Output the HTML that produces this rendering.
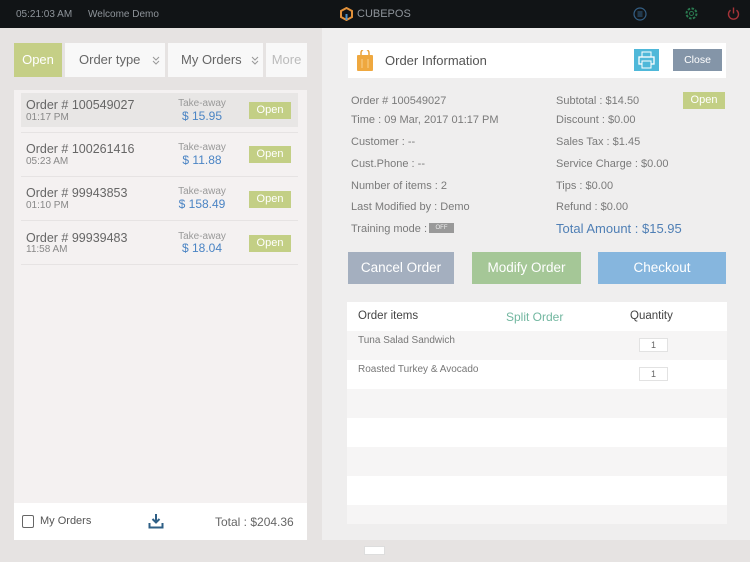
<!DOCTYPE html>
<html><head><style>
*{margin:0;padding:0;box-sizing:border-box}
body{width:750px;height:562px;overflow:hidden;background:#e6e3e2;font-family:"Liberation Sans",sans-serif;position:relative;color:#555}
.a{position:absolute}
.top{left:0;top:0;width:750px;height:28px;background:#111416;color:#8e949a;font-size:10px}
.tab{top:43px;height:34px;background:#f8f8f8;font-size:13px;color:#666;line-height:34px}
.row{left:21px;width:277px;height:44px;border-bottom:1px solid #e6e3e3}
.on{font-size:12.5px;color:#666}
.tm{font-size:10px;color:#888}
.ta{font-size:10px;color:#999;text-align:center;width:60px}
.pr{font-size:12px;color:#4a84c4;text-align:center;width:60px}
.ob{width:42px;height:17px;background:#c3cf85;color:#fff;font-size:11px;text-align:center;line-height:17px}
.info{font-size:11px;color:#7a7a7a}
.btn{top:252px;height:32px;color:#fff;font-size:13.5px;text-align:center;line-height:32px}
.tr{left:347px;width:380px;height:29px}
.q{left:639px;width:29px;height:14px;background:#fff;border:1px solid #e2e2e2;font-size:9px;text-align:center;line-height:12px;color:#666}
.chev{position:absolute;top:13px}
</style></head><body>
<div class="a top">
 <span class="a" style="left:16px;top:9px">05:21:03 AM</span>
 <span class="a" style="left:88px;top:9px">Welcome Demo</span>
 <svg class="a" style="left:340px;top:7px" width="13" height="14" viewBox="0 0 13 14"><path d="M6.5 1L12 4v6l-5.5 3L1 10V4z" fill="none" stroke="#e2913a" stroke-width="2"/><path d="M6.5 7v6" stroke="#4a90c8" stroke-width="2"/></svg>
 <span class="a" style="left:357px;top:8px;font-size:11px;color:#8e949a">CUBEPOS</span>
 <svg class="a" style="left:633px;top:7px" width="14" height="14"><circle cx="7" cy="7" r="6" fill="none" stroke="#345f85" stroke-width="1.2"/><path d="M4.5 5h5M4.5 7h5M4.5 9h5" stroke="#345f85"/></svg>
 <svg class="a" style="left:684px;top:6px" width="15" height="15"><circle cx="7.5" cy="7.5" r="5" fill="none" stroke="#2a7a50" stroke-width="2" stroke-dasharray="2.5 1.4"/><circle cx="7.5" cy="7.5" r="2" fill="none" stroke="#2a7a50"/></svg>
 <svg class="a" style="left:726px;top:6px" width="15" height="15"><path d="M4.5 4.2A5 5 0 1 0 10.5 4.2" fill="none" stroke="#a53338" stroke-width="1.4"/><path d="M7.5 1.5v6" stroke="#a53338" stroke-width="1.4"/></svg>
</div>
<div class="a" style="left:322px;top:28px;width:428px;height:512px;background:#efeeee"></div>
<div class="a tab" style="left:14px;width:48px;background:#c5cf86;color:#fff;text-align:center">Open</div>
<div class="a tab" style="left:65px;width:100px;padding-left:14px">Order type<svg class="chev" style="left:87px" width="8" height="9"><path d="M1 1l3 3 3-3M1 5l3 3 3-3" fill="none" stroke="#999"/></svg></div>
<div class="a tab" style="left:168px;width:95px;padding-left:13px">My Orders<svg class="chev" style="left:83px" width="8" height="9"><path d="M1 1l3 3 3-3M1 5l3 3 3-3" fill="none" stroke="#999"/></svg></div>
<div class="a tab" style="left:266px;width:41px;text-align:center;color:#bbb">More</div>
<div class="a" style="left:14px;top:90px;width:293px;height:413px;background:#f4f1f1"></div>
<div class="a row" style="top:93px;height:34px;background:#e8e6e5;border:none"></div>
<div class="a" style="left:21px;top:132px;width:277px;border-top:1px solid #e6e3e3"></div>
<div class="a" style="left:21px;top:176px;width:277px;border-top:1px solid #e6e3e3"></div>
<div class="a" style="left:21px;top:220px;width:277px;border-top:1px solid #e6e3e3"></div>
<div class="a" style="left:21px;top:264px;width:277px;border-top:1px solid #e6e3e3"></div>

<div class="a on" style="left:26px;top:98px">Order # 100549027</div><div class="a tm" style="left:26px;top:112px">01:17 PM</div>
<div class="a ta" style="left:172px;top:98px">Take-away</div><div class="a pr" style="left:172px;top:109px">$ 15.95</div><div class="a ob" style="left:249px;top:102px">Open</div>
<div class="a on" style="left:26px;top:142px">Order # 100261416</div><div class="a tm" style="left:26px;top:156px">05:23 AM</div>
<div class="a ta" style="left:172px;top:142px">Take-away</div><div class="a pr" style="left:172px;top:153px">$ 11.88</div><div class="a ob" style="left:249px;top:146px">Open</div>
<div class="a on" style="left:26px;top:186px">Order # 99943853</div><div class="a tm" style="left:26px;top:200px">01:10 PM</div>
<div class="a ta" style="left:172px;top:186px">Take-away</div><div class="a pr" style="left:172px;top:197px">$ 158.49</div><div class="a ob" style="left:249px;top:191px">Open</div>
<div class="a on" style="left:26px;top:231px">Order # 99939483</div><div class="a tm" style="left:26px;top:244px">11:58 AM</div>
<div class="a ta" style="left:172px;top:231px">Take-away</div><div class="a pr" style="left:172px;top:241px">$ 18.04</div><div class="a ob" style="left:249px;top:235px">Open</div>

<div class="a" style="left:14px;top:503px;width:293px;height:37px;background:#fff"></div>
<div class="a" style="left:22px;top:515px;width:12px;height:13px;border:1.3px solid #666;border-radius:2px"></div>
<div class="a" style="left:40px;top:515px;font-size:11px;color:#555">My Orders</div>
<svg class="a" style="left:148px;top:513px" width="16" height="16"><path d="M8 1v8M4.5 6L8 9.5 11.5 6" fill="none" stroke="#2e5f86" stroke-width="2"/><path d="M1.5 10v4.5h13V10" fill="none" stroke="#2e5f86" stroke-width="2"/></svg>
<div class="a" style="left:215px;top:515px;font-size:12px;color:#666">Total : $204.36</div>

<div class="a" style="left:348px;top:43px;width:378px;height:35px;background:#fff"></div>
<svg class="a" style="left:356px;top:50px" width="18" height="22"><path d="M5 5V3a4 4 0 0 1 8 0v2" fill="none" stroke="#e9a23b" stroke-width="1.5"/><rect x="1" y="5" width="16" height="16" rx="1" fill="#efa83f"/><path d="M6 9v9M12 9v9" stroke="#f8d08c"/></svg>
<div class="a" style="left:385px;top:53px;font-size:13px;color:#555">Order Information</div>
<div class="a" style="left:634px;top:49px;width:25px;height:22px;background:#4fb8d9"></div>
<svg class="a" style="left:638px;top:51px" width="17" height="18"><rect x="4" y="1" width="9" height="5" fill="none" stroke="#fff"/><rect x="1" y="6" width="15" height="7" fill="none" stroke="#fff" stroke-width="1.3"/><rect x="4" y="10" width="9" height="7" fill="#4fb8d9" stroke="#fff"/></svg>
<div class="a" style="left:673px;top:49px;width:49px;height:22px;background:#8495a8;color:#fff;font-size:10.5px;text-align:center;line-height:22px">Close</div>

<div class="a info" style="left:351px;top:95px">Order # 100549027</div>
<div class="a info" style="left:351px;top:114px">Time : 09 Mar, 2017 01:17 PM</div>
<div class="a info" style="left:351px;top:136px">Customer : --</div>
<div class="a info" style="left:351px;top:158px">Cust.Phone : --</div>
<div class="a info" style="left:351px;top:180px">Number of items : 2</div>
<div class="a info" style="left:351px;top:201px">Last Modified by : Demo</div>
<div class="a info" style="left:351px;top:223px">Training mode :</div>
<div class="a" style="left:429px;top:223px;width:25px;height:10px;background:#999;color:#eee;font-size:6px;text-align:center;line-height:10px">OFF</div>
<div class="a info" style="left:556px;top:95px">Subtotal : $14.50</div>
<div class="a info" style="left:556px;top:114px">Discount : $0.00</div>
<div class="a info" style="left:556px;top:136px">Sales Tax : $1.45</div>
<div class="a info" style="left:556px;top:158px">Service Charge : $0.00</div>
<div class="a info" style="left:556px;top:180px">Tips : $0.00</div>
<div class="a info" style="left:556px;top:201px">Refund : $0.00</div>
<div class="a" style="left:556px;top:221px;font-size:13px;color:#4f7fb5">Total Amount : $15.95</div>
<div class="a ob" style="left:683px;top:92px;width:42px;height:17px">Open</div>

<div class="a btn" style="left:348px;width:106px;background:#a4afbf">Cancel Order</div>
<div class="a btn" style="left:472px;width:109px;background:#a5c797">Modify Order</div>
<div class="a btn" style="left:598px;width:128px;background:#86b6de">Checkout</div>

<div class="a tr" style="top:302px;background:#fff"></div>
<div class="a" style="left:358px;top:310px;font-size:11.5px;color:#444">Order items</div>
<div class="a" style="left:506px;top:310px;font-size:12px;color:#72b7a0">Split Order</div>
<div class="a" style="left:630px;top:310px;font-size:11.5px;color:#444">Quantity</div>
<div class="a tr" style="top:331px;background:#f6f5f5"></div>
<div class="a tr" style="top:360px;background:#fff"></div>
<div class="a tr" style="top:389px;background:#f6f5f5"></div>
<div class="a tr" style="top:418px;background:#fff"></div>
<div class="a tr" style="top:447px;background:#f6f5f5"></div>
<div class="a tr" style="top:476px;background:#fff"></div>
<div class="a tr" style="top:505px;height:19px;background:#f6f5f5"></div>
<div class="a" style="left:358px;top:335px;font-size:10px;color:#777">Tuna Salad Sandwich</div>
<div class="a" style="left:358px;top:364px;font-size:10px;color:#777">Roasted Turkey &amp; Avocado</div>
<div class="a q" style="top:338px">1</div>
<div class="a q" style="top:367px">1</div>
<div class="a" style="left:364px;top:546px;width:21px;height:9px;background:#fff;border:1px solid #ddd"></div>
</body></html>
